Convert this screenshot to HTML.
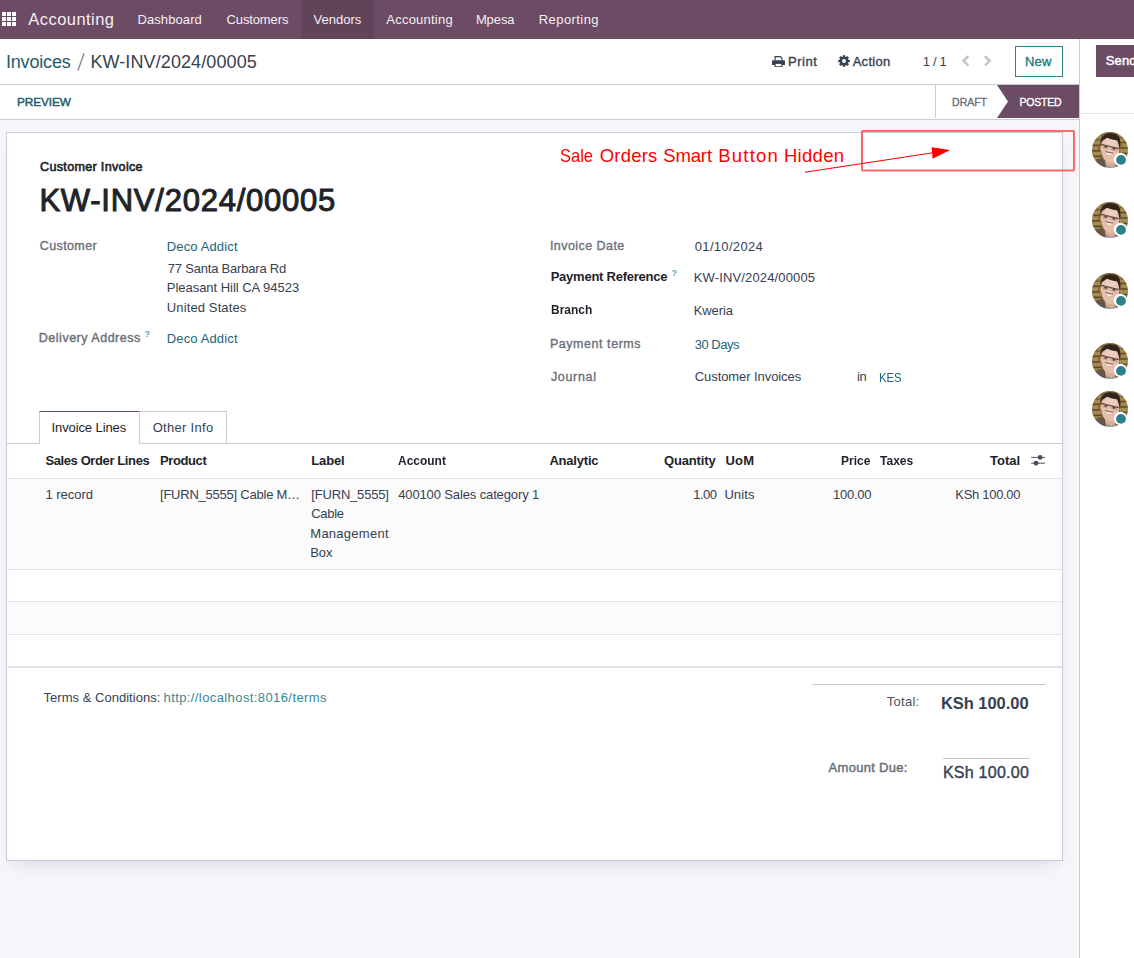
<!DOCTYPE html>
<html lang="en">
<head>
<meta charset="utf-8">
<title>Invoices / KW-INV/2024/00005</title>
<style>
*{box-sizing:border-box;margin:0;padding:0}
html,body{width:1134px;height:958px;overflow:hidden;background:#f5f6fa;font-family:"Liberation Sans",sans-serif;}
.a{position:absolute}
.t{position:absolute;white-space:pre;line-height:1;font-family:"Liberation Sans",sans-serif;}
#page{position:relative;width:1134px;height:958px;overflow:hidden;background:#f5f6fa}
</style>
</head>
<body>
<div id="page">

<!-- NAVBAR -->
<div class="a" style="left:0;top:0;width:1134px;height:39px;background:#6c4b64"></div>
<div class="a" style="left:301px;top:0;width:73px;height:39px;background:#61435a"></div>
<svg class="a" style="left:2px;top:12px" width="14" height="14" viewBox="0 0 14 14" fill="#fff">
<rect x="0" y="0" width="4" height="4"/><rect x="5" y="0" width="4" height="4"/><rect x="10" y="0" width="4" height="4"/>
<rect x="0" y="5" width="4" height="4"/><rect x="5" y="5" width="4" height="4"/><rect x="10" y="5" width="4" height="4"/>
<rect x="0" y="10" width="4" height="4"/><rect x="5" y="10" width="4" height="4"/><rect x="10" y="10" width="4" height="4"/>
</svg>

<!-- CONTROL PANEL + STATUS BAR (white) -->
<div class="a" style="left:0;top:39px;width:1079px;height:45px;background:#fff"></div>
<div class="a" style="left:0;top:84px;width:1079px;height:1px;background:#c9ccd3"></div>
<div class="a" style="left:0;top:85px;width:1079px;height:34px;background:#fff"></div>
<div class="a" style="left:0;top:119px;width:1079px;height:1px;background:#c9ccd3"></div>

<!-- print icon -->
<svg class="a" style="left:772px;top:55.600px" width="13" height="11.400" viewBox="0 0 13 11.400">
<path d="M3.100 4.600V0.600h5.300l1.500 1.500v2.500" fill="#fff" stroke="#374151" stroke-width="1.150"/>
<path d="M1.100 4.200h10.800c0.600 0 1.100 0.500 1.100 1.100v3.700h-13v-3.700c0-0.600 0.500-1.100 1.100-1.100z" fill="#374151"/>
<rect x="3.100" y="7.300" width="6.800" height="3.500" fill="#fff" stroke="#374151" stroke-width="1.150"/>
</svg>
<!-- gear icon -->
<svg class="a" style="left:837.500px;top:55.400px" width="12" height="12" viewBox="-6 -6 12 12">
<g fill="#374151">
<circle r="4.250"/>
<g id="th"><rect x="-1.350" y="-5.850" width="2.700" height="11.700" rx="0.400"/></g>
<use href="#th" transform="rotate(45)"/><use href="#th" transform="rotate(90)"/><use href="#th" transform="rotate(135)"/>
</g>
<circle r="1.950" fill="#fff"/>
</svg>
<!-- pager chevrons -->
<svg class="a" style="left:961px;top:55px" width="10" height="13" viewBox="0 0 10 13"><path d="M7.300 1.100L2.500 5.800l4.800 4.700" fill="none" stroke="#c0c2ca" stroke-width="2.400"/></svg>
<svg class="a" style="left:982px;top:55px" width="10" height="13" viewBox="0 0 10 13"><path d="M2.900 1.100l4.800 4.700-4.800 4.700" fill="none" stroke="#c0c2ca" stroke-width="2.400"/></svg>
<!-- breadcrumb slash -->
<svg class="a" style="left:75px;top:50px" width="12" height="24" viewBox="75 50 12 24"><path d="M77.900 70.600L84.100 53.300" stroke="#8f9097" stroke-width="1.500" fill="none"/></svg>
<!-- New button -->
<div class="a" style="left:1015px;top:46px;width:48px;height:31px;border:1px solid #2a8087;background:#fff"></div>

<!-- status bar -->
<div class="a" style="left:935px;top:85px;width:1px;height:33px;background:#c9ccd3"></div>
<svg class="a" style="left:996px;top:85px" width="83" height="33" viewBox="0 0 83 33"><path d="M1 0H83V33H1L12 16.5z" fill="#6c4b64"/></svg>

<!-- CHATTER -->
<div class="a" style="left:1079px;top:39px;width:1px;height:919px;background:#c9ccd3"></div>
<div class="a" style="left:1080px;top:39px;width:54px;height:919px;background:#fff"></div>
<div class="a" style="left:1080px;top:113px;width:54px;height:1px;background:#e6e8ec"></div>
<div class="a" style="left:1096px;top:45px;width:60px;height:32px;background:#6c4b64"></div>

<!-- SHEET -->
<div class="a" style="left:6px;top:132px;width:1057px;height:729px;background:#fff;border:1px solid #c9ccd3;box-shadow:0 9px 16px -8px rgba(30,35,60,.15)"></div>

<!-- tabs -->
<div class="a" style="left:7px;top:443px;width:1055px;height:1px;background:#c9ccd3"></div>
<div class="a" style="left:39px;top:411px;width:101px;height:33px;background:#fff;border:1px solid #c9ccd3;border-top-color:#6c4b64;border-bottom:0"></div>
<div class="a" style="left:139px;top:411px;width:88px;height:32px;background:#fff;border:1px solid #c9ccd3;border-bottom:0"></div>

<!-- table -->
<div class="a" style="left:8px;top:478px;width:1054px;height:1px;background:#e1e3e8"></div>
<div class="a" style="left:8px;top:479px;width:1053px;height:90px;background:#fbfbfc"></div>
<div class="a" style="left:8px;top:569px;width:1054px;height:1px;background:#e1e3e8"></div>
<div class="a" style="left:8px;top:601px;width:1054px;height:1px;background:#e1e3e8"></div>
<div class="a" style="left:8px;top:602px;width:1053px;height:32px;background:#fbfbfc"></div>
<div class="a" style="left:8px;top:634px;width:1054px;height:1px;background:#e1e3e8"></div>
<div class="a" style="left:8px;top:666px;width:1054px;height:2px;background:#e1e2e7"></div>
<!-- optional columns icon -->
<svg class="a" style="left:1031px;top:454px" width="15" height="13" viewBox="1031 454 15 13">
<path d="M1031.200 457.400h13.900M1031.200 463.200h13.900" stroke="#4b4f5c" stroke-width="0.950" fill="none"/>
<circle cx="1040.100" cy="457.400" r="2.400" fill="#4b4f5c"/>
<circle cx="1036" cy="463.200" r="2.400" fill="#4b4f5c"/>
</svg>

<!-- totals lines -->
<div class="a" style="left:812px;top:684px;width:234px;height:1px;background:#c6c8cf"></div>
<div class="a" style="left:943px;top:758px;width:87px;height:1px;background:#c6c8cf"></div>

<!-- AVATARS -->
<svg width="0" height="0" style="position:absolute">
<defs>
<filter id="avb" x="-10%" y="-10%" width="120%" height="120%"><feGaussianBlur stdDeviation="0.7"/></filter>
<clipPath id="avc"><circle cx="18" cy="18" r="18"/></clipPath>
<g id="av">
<g clip-path="url(#avc)">
<g filter="url(#avb)">
<rect x="-2" y="-2" width="40" height="40" fill="#82683a"/>
<path d="M-2 -2h40v6c-6-3-12-4-20-4s-14 1-20 4z" fill="#3f2c14"/>
<g fill="#a38b55">
<rect x="0" y="9" width="8" height="3.200"/><rect x="-1" y="14.500" width="7" height="3.400"/><rect x="1" y="20" width="8" height="3.200"/><rect x="2" y="25.500" width="7" height="2.800"/>
<rect x="28" y="6.500" width="7" height="3"/><rect x="29.500" y="11.500" width="7" height="3.400"/><rect x="28" y="17" width="8" height="3.400"/><rect x="29" y="22.500" width="7" height="3"/>
<rect x="4" y="4" width="5" height="2.600"/><rect x="25" y="2.500" width="5" height="2.400"/>
</g>
<g stroke="#5f4822" stroke-width="1" fill="none"><path d="M-1 13.300h10M-1 18.900h9M0 24.400h10M27 10.500h10M27 16h10M28 21.500h9M28 26.500h8"/></g>
<path d="M-2 38v-6c3-4 7-5 11-6l4 3 10 1 5-3c4 1 7 3 10 6v5z" fill="#66574a"/>
<path d="M14 31l9 0.500 3 7h-13z" fill="#9a989c"/>
<path d="M12.500 22l11 1.500 1 8-5 3.500-6-2.500z" fill="#d9ab90"/>
<path d="M8.600 14.500c-1.200 0.300-1.400 3.500 0.400 4.800z" fill="#c99579"/>
<path d="M9.200 9.500c2-5 14-5.500 17 0.500c1.600 4 1.400 9 0.200 13c-1.400 4.500-4.400 8-8 8c-4.400 0-8-5-9-11c-0.500-3.500-0.800-7-0.200-10.500z" fill="#e4bfad"/>
<path d="M14 6.500c4-1 8 0 10 2.500c1 3 1 7 0 10l-5 1c-3-1-5-3-6-6c-0.500-3 0-6 1-7.500z" fill="#f2d3c2" opacity=".75"/>
<path d="M8.800 13c-0.600-4.500 0.600-8.300 4-10.500c4-2 10-1.800 13.200 1c2.600 2.600 2.800 8 1.600 14c-0.500-3.200-1-6.500-2.400-9.200c-3.200-0.300-7-1-10-2.600c-1.800 1.100-4 2.200-4.800 3.200c-0.800 1-1.200 2.600-1.600 4.100z" fill="#33271f"/>
<path d="M9 12.400L26.600 16.600" stroke="#4b3a33" stroke-width="1.300" fill="none"/>
<path d="M10.500 12.800l6.500 1.500-0.300 3.200-6-0.800zM19.300 15l6 1.400-0.500 3-5.700-1z" fill="#b98f7c" opacity=".55"/>
<path d="M12.500 14.600l2.600 0.500M20.600 16.600l2.600 0.500" stroke="#3a2b26" stroke-width="1.100"/>
<path d="M14 19.900c2.200 1 4.600 1.500 6.800 1.400c-0.900 1.400-2.300 1.900-3.700 1.700c-1.300-0.200-2.500-1.300-3.100-3.100z" fill="#f6e9e2"/>
<path d="M13.400 19.400c2.500 1 5.200 1.600 7.800 1.500" stroke="#7a4a3c" stroke-width="0.900" fill="none"/>
<path d="M17.800 13.500c0.600 2 0.800 3.400 0.200 4.800" stroke="#c4927a" stroke-width="0.800" fill="none"/>
</g>
</g>
<circle cx="28.400" cy="27.500" r="6.700" fill="#fff"/>
<circle cx="29" cy="27.900" r="4.900" fill="#2d7f8a"/>
</g>
</defs>
</svg>
<svg class="a" style="left:1092px;top:132px" width="38" height="38" viewBox="0 0 38 38"><use href="#av"/></svg>
<svg class="a" style="left:1092px;top:202px" width="38" height="38" viewBox="0 0 38 38"><use href="#av"/></svg>
<svg class="a" style="left:1092px;top:273px" width="38" height="38" viewBox="0 0 38 38"><use href="#av"/></svg>
<svg class="a" style="left:1092px;top:343px" width="38" height="38" viewBox="0 0 38 38"><use href="#av"/></svg>
<svg class="a" style="left:1092px;top:391px" width="38" height="38" viewBox="0 0 38 38"><use href="#av"/></svg>

<!-- RED ANNOTATION -->
<svg class="a" style="left:790px;top:120px" width="300" height="70" viewBox="790 120 300 70">
<rect x="862" y="131" width="212" height="39.500" rx="0.600" fill="none" stroke="#fb6a6a" stroke-width="2"/>
<path d="M804.800 172.200L933 152.800" stroke="#ff0000" stroke-width="1.100" fill="none"/>
<path d="M950.200 150L931.700 147.200L932.600 158.700z" fill="#ff0000"/>
</svg>

<span class="t" style="left:28.30px;top:10.60px;font-size:16.5px;color:#f4eff3;letter-spacing:0.449px;">Accounting</span>
<span class="t" style="left:137.40px;top:13.20px;font-size:13px;color:#f4eff3;letter-spacing:0.104px;">Dashboard</span>
<span class="t" style="left:226.50px;top:13.20px;font-size:13px;color:#f4eff3;letter-spacing:-0.119px;">Customers</span>
<span class="t" style="left:313.50px;top:13.20px;font-size:13px;color:#f4eff3;letter-spacing:0.016px;">Vendors</span>
<span class="t" style="left:386.30px;top:13.20px;font-size:13px;color:#f4eff3;letter-spacing:0.223px;">Accounting</span>
<span class="t" style="left:475.90px;top:13.20px;font-size:13px;color:#f4eff3;letter-spacing:-0.097px;">Mpesa</span>
<span class="t" style="left:538.80px;top:13.20px;font-size:13px;color:#f4eff3;letter-spacing:0.420px;">Reporting</span>
<span class="t" style="left:5.90px;top:52.80px;font-size:18px;color:#1d5c6b;letter-spacing:-0.162px;">Invoices</span>
<span class="t" style="left:90.40px;top:52.80px;font-size:18px;color:#374151;letter-spacing:0.103px;">KW-INV/2024/00005</span>
<span class="t" style="left:787.97px;top:54.90px;font-size:13px;color:#374151;letter-spacing:0.533px;-webkit-text-stroke:0.35px #374151;">Print</span>
<span class="t" style="left:852.67px;top:54.90px;font-size:13px;color:#374151;letter-spacing:0.290px;-webkit-text-stroke:0.35px #374151;">Action</span>
<span class="t" style="left:922.80px;top:54.90px;font-size:13px;color:#374151;letter-spacing:-0.341px;">1 / 1</span>
<span class="t" style="left:1024.97px;top:54.90px;font-size:13px;color:#1b7a80;letter-spacing:0.266px;-webkit-text-stroke:0.35px #1b7a80;">New</span>
<span class="t" style="left:1105.82px;top:54.00px;font-size:13px;color:#fff;letter-spacing:0.106px;-webkit-text-stroke:0.45px #fff;">Send</span>
<span class="t" style="left:17.03px;top:96.80px;font-size:11.8px;color:#1d5c6b;letter-spacing:-0.070px;-webkit-text-stroke:0.45px #1d5c6b;">PREVIEW</span>
<span class="t" style="left:952.07px;top:96.70px;font-size:10.5px;color:#6b6f78;letter-spacing:-0.008px;-webkit-text-stroke:0.35px #6b6f78;">DRAFT</span>
<span class="t" style="left:1019.47px;top:96.70px;font-size:10.5px;color:#fff;letter-spacing:-0.208px;-webkit-text-stroke:0.35px #fff;">POSTED</span>
<span class="t" style="left:559.50px;top:147.00px;font-size:18.5px;color:#ff0000;transform:scaleX(0.8928);transform-origin:0 0;">Sale</span>
<span class="t" style="left:599.70px;top:147.00px;font-size:18.5px;color:#ff0000;letter-spacing:0.222px;">Orders</span>
<span class="t" style="left:663.20px;top:147.00px;font-size:18.5px;color:#ff0000;letter-spacing:-0.125px;">Smart</span>
<span class="t" style="left:718.30px;top:147.00px;font-size:18.5px;color:#ff0000;letter-spacing:1.201px;">Button</span>
<span class="t" style="left:783.90px;top:147.00px;font-size:18.5px;color:#ff0000;letter-spacing:0.313px;">Hidden</span>
<span class="t" style="left:40.00px;top:161.00px;font-size:12.6px;color:#1f2329;letter-spacing:0.308px;-webkit-text-stroke:0.6px #1f2329;">Customer Invoice</span>
<span class="t" style="left:39.40px;top:185.00px;font-size:31px;color:#1f2329;letter-spacing:0.755px;-webkit-text-stroke:1.0px #1f2329;">KW-INV/2024/00005</span>
<span class="t" style="left:39.77px;top:240.20px;font-size:12.5px;color:#6b6f78;letter-spacing:0.390px;-webkit-text-stroke:0.35px #6b6f78;">Customer</span>
<span class="t" style="left:166.80px;top:239.70px;font-size:13px;color:#1d6478;letter-spacing:0.132px;">Deco Addict</span>
<span class="t" style="left:167.80px;top:261.70px;font-size:13px;color:#374151;letter-spacing:-0.206px;">77 Santa Barbara Rd</span>
<span class="t" style="left:166.80px;top:280.70px;font-size:13px;color:#374151;letter-spacing:-0.031px;">Pleasant Hill CA 94523</span>
<span class="t" style="left:166.80px;top:300.50px;font-size:13px;color:#374151;letter-spacing:0.121px;">United States</span>
<span class="t" style="left:38.80px;top:331.60px;font-size:12.5px;color:#6b6f78;letter-spacing:0.512px;-webkit-text-stroke:0.4px #6b6f78;">Delivery Address</span>
<span class="t" style="left:144.80px;top:330.10px;font-size:8.5px;color:#5b9bbb;font-weight:700;">?</span>
<span class="t" style="left:166.80px;top:331.60px;font-size:13px;color:#1d6478;letter-spacing:0.132px;">Deco Addict</span>
<span class="t" style="left:549.88px;top:240.10px;font-size:12.5px;color:#6b6f78;letter-spacing:0.447px;-webkit-text-stroke:0.35px #6b6f78;">Invoice Date</span>
<span class="t" style="left:694.80px;top:239.50px;font-size:13px;color:#374151;letter-spacing:0.319px;">01/10/2024</span>
<span class="t" style="left:550.70px;top:269.90px;font-size:13px;color:#1f2329;font-weight:700;letter-spacing:-0.240px;">Payment Reference</span>
<span class="t" style="left:671.70px;top:268.60px;font-size:8.5px;color:#5b9bbb;font-weight:700;">?</span>
<span class="t" style="left:693.80px;top:270.60px;font-size:13px;color:#374151;letter-spacing:0.139px;">KW-INV/2024/00005</span>
<span class="t" style="left:550.70px;top:302.80px;font-size:13px;color:#1f2329;font-weight:700;transform:scaleX(0.9209);transform-origin:0 0;">Branch</span>
<span class="t" style="left:693.80px;top:303.50px;font-size:13px;color:#374151;letter-spacing:-0.121px;">Kweria</span>
<span class="t" style="left:549.88px;top:338.00px;font-size:12.5px;color:#6b6f78;letter-spacing:0.554px;-webkit-text-stroke:0.35px #6b6f78;">Payment terms</span>
<span class="t" style="left:694.80px;top:337.60px;font-size:13px;color:#1d6478;letter-spacing:-0.498px;">30 Days</span>
<span class="t" style="left:550.88px;top:370.80px;font-size:12.5px;color:#6b6f78;letter-spacing:0.672px;-webkit-text-stroke:0.35px #6b6f78;">Journal</span>
<span class="t" style="left:694.80px;top:370.00px;font-size:13px;color:#374151;letter-spacing:-0.078px;">Customer Invoices</span>
<span class="t" style="left:857.00px;top:370.00px;font-size:13px;color:#374151;letter-spacing:-0.488px;">in</span>
<span class="t" style="left:878.93px;top:370.50px;font-size:13px;color:#1d6478;transform:scaleX(0.8721);transform-origin:0 0;">KES</span>
<span class="t" style="left:51.50px;top:420.90px;font-size:13px;color:#1f2329;letter-spacing:-0.098px;">Invoice Lines</span>
<span class="t" style="left:152.70px;top:420.90px;font-size:13px;color:#374151;letter-spacing:0.302px;">Other Info</span>
<span class="t" style="left:45.40px;top:454.30px;font-size:13px;color:#1f2329;font-weight:700;letter-spacing:-0.389px;">Sales Order Lines</span>
<span class="t" style="left:160.00px;top:454.30px;font-size:13px;color:#1f2329;font-weight:700;letter-spacing:-0.397px;">Product</span>
<span class="t" style="left:311.30px;top:454.30px;font-size:13px;color:#1f2329;font-weight:700;letter-spacing:-0.160px;">Label</span>
<span class="t" style="left:398.20px;top:454.30px;font-size:13px;color:#1f2329;font-weight:700;transform:scaleX(0.9208);transform-origin:0 0;">Account</span>
<span class="t" style="left:549.40px;top:454.30px;font-size:13px;color:#1f2329;font-weight:700;letter-spacing:-0.206px;">Analytic</span>
<span class="t" style="left:664.00px;top:454.30px;font-size:13px;color:#1f2329;font-weight:700;letter-spacing:-0.156px;">Quantity</span>
<span class="t" style="left:725.40px;top:454.30px;font-size:13px;color:#1f2329;font-weight:700;letter-spacing:0.285px;">UoM</span>
<span class="t" style="left:841.40px;top:454.30px;font-size:13px;color:#1f2329;font-weight:700;transform:scaleX(0.9217);transform-origin:0 0;">Price</span>
<span class="t" style="left:879.80px;top:454.30px;font-size:13px;color:#1f2329;font-weight:700;transform:scaleX(0.9253);transform-origin:0 0;">Taxes</span>
<span class="t" style="left:990.00px;top:454.30px;font-size:13px;color:#1f2329;font-weight:700;letter-spacing:0.006px;">Total</span>
<span class="t" style="left:45.40px;top:488.20px;font-size:13px;color:#374151;letter-spacing:-0.009px;">1 record</span>
<span class="t" style="left:160.00px;top:488.20px;font-size:13px;color:#374151;letter-spacing:-0.231px;">[FURN_5555] Cable M…</span>
<span class="t" style="left:311.30px;top:488.20px;font-size:13px;color:#374151;letter-spacing:-0.187px;">[FURN_5555]</span>
<span class="t" style="left:311.30px;top:507.20px;font-size:13px;color:#374151;letter-spacing:-0.334px;">Cable</span>
<span class="t" style="left:310.30px;top:526.60px;font-size:13px;color:#374151;letter-spacing:0.259px;">Management</span>
<span class="t" style="left:310.30px;top:545.60px;font-size:13px;color:#374151;letter-spacing:-0.100px;">Box</span>
<span class="t" style="left:398.20px;top:488.20px;font-size:13px;color:#374151;letter-spacing:-0.127px;">400100 Sales category 1</span>
<span class="t" style="left:693.20px;top:488.20px;font-size:13px;color:#374151;letter-spacing:-0.491px;">1.00</span>
<span class="t" style="left:724.40px;top:488.20px;font-size:13px;color:#374151;letter-spacing:0.095px;">Units</span>
<span class="t" style="left:832.90px;top:488.20px;font-size:13px;color:#374151;letter-spacing:-0.226px;">100.00</span>
<span class="t" style="left:955.30px;top:488.20px;font-size:13px;color:#374151;letter-spacing:-0.302px;">KSh 100.00</span>
<span class="t" style="left:43.50px;top:690.90px;font-size:13px;color:#374151;letter-spacing:0.027px;">Terms &amp; Conditions:</span>
<span class="t" style="left:163.50px;top:690.90px;font-size:13px;color:#3a8790;letter-spacing:0.405px;">http://localhost:8016/terms</span>
<span class="t" style="left:886.70px;top:695.30px;font-size:13px;color:#4b5060;letter-spacing:0.288px;">Total:</span>
<span class="t" style="left:940.90px;top:694.60px;font-size:16.5px;color:#374151;font-weight:700;letter-spacing:-0.042px;">KSh 100.00</span>
<span class="t" style="left:828.62px;top:761.00px;font-size:13px;color:#6b6f78;letter-spacing:0.279px;-webkit-text-stroke:0.45px #6b6f78;">Amount Due:</span>
<span class="t" style="left:942.90px;top:764.60px;font-size:16px;color:#374151;letter-spacing:0.253px;-webkit-text-stroke:0.4px #374151;">KSh 100.00</span>

</div>
</body>
</html>
